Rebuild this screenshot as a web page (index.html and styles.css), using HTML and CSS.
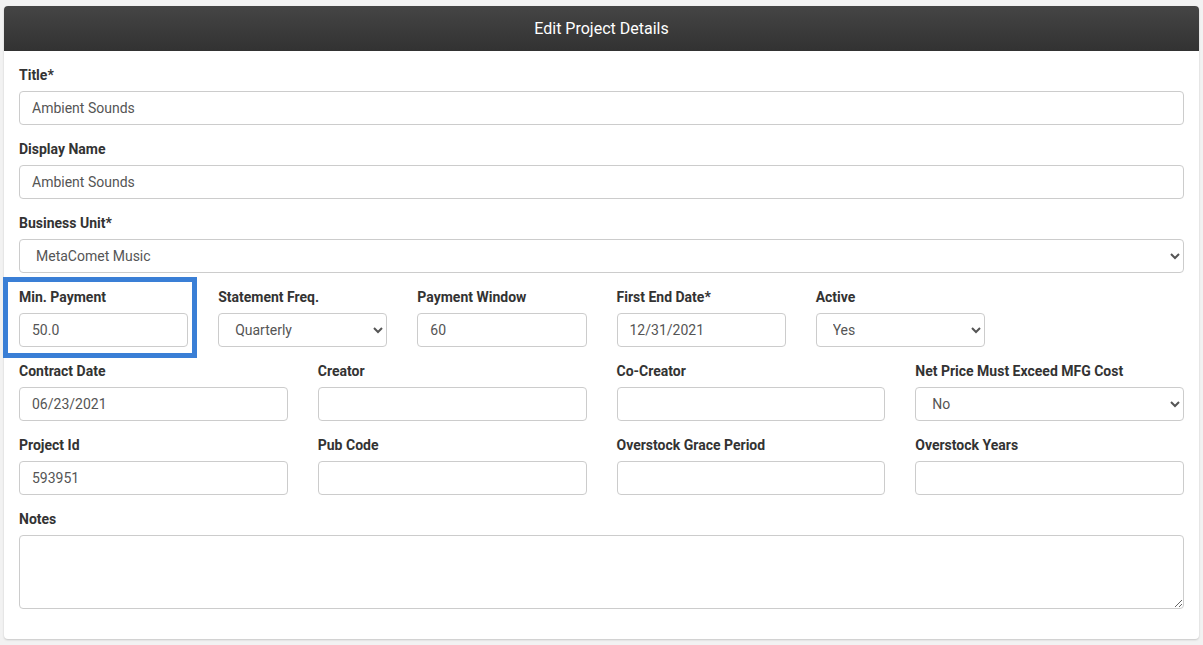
FILE: index.html
```html
<!DOCTYPE html>
<html lang="en">
<head>
<meta charset="UTF-8" />
<meta name="viewport" content="width=device-width, initial-scale=1.0"/>
<title>Edit Project Details</title>
<link rel="stylesheet" href="styles.css">
</head>
<body>
<div class="panel">
<div class="panel-heading">Edit Project Details</div>
<form class="panel-body">

<div class="field">
<label>Title*</label>
<input type="text" value="Ambient Sounds" />
</div>

<div class="field">
<label>Display Name</label>
<input type="text" value="Ambient Sounds" />
</div>

<div class="field">
<label>Business Unit*</label>
<select>
<option>MetaComet Music</option>
</select>
</div>

<div class="row six">
<div class="field highlighted">
<label>Min. Payment</label>
<input type="text" value="50.0" />
</div>
<div class="field">
<label>Statement Freq.</label>
<select>
<option>Quarterly</option>
</select>
</div>
<div class="field">
<label>Payment Window</label>
<input type="text" value="60" />
</div>
<div class="field">
<label>First End Date*</label>
<input type="text" value="12/31/2021" />
</div>
<div class="field">
<label>Active</label>
<select>
<option>Yes</option>
</select>
</div>
</div>

<div class="row four">
<div class="field">
<label>Contract Date</label>
<input type="text" value="06/23/2021" />
</div>
<div class="field">
<label>Creator</label>
<input type="text" />
</div>
<div class="field">
<label>Co-Creator</label>
<input type="text" />
</div>
<div class="field">
<label>Net Price Must Exceed MFG Cost</label>
<select>
<option>No</option>
</select>
</div>
</div>

<div class="row four">
<div class="field">
<label>Project Id</label>
<input type="text" value="593951" />
</div>
<div class="field">
<label>Pub Code</label>
<input type="text" />
</div>
<div class="field">
<label>Overstock Grace Period</label>
<input type="text" />
</div>
<div class="field">
<label>Overstock Years</label>
<input type="text" />
</div>
</div>

<div class="field">
<label>Notes</label>
<textarea></textarea>
</div>

</form>
</div>
</body>
</html>
```

FILE: styles.css
```css
* {
box-sizing: border-box;
margin: 0;
padding: 0;
}

body {
font-family: Roboto, 'Liberation Sans', Arial, sans-serif;
background: #f2f2f2;
padding: 6px 4px;
}

.panel {
background: #fff;
border-radius: 4px;
box-shadow: 0 1px 2px rgba(0, 0, 0, 0.18);
}

.panel-heading {
height: 45px;
line-height: 45px;
text-align: center;
color: #fff;
font-size: 16px;
background: linear-gradient(#454545, #323232);
border-radius: 4px 4px 0 0;
}

.panel-body {
padding: 14px 15px 16px;
}

.field {
margin-bottom: 14px;
position: relative;
}

.field label {
display: block;
font-size: 14px;
font-weight: bold;
line-height: 20px;
color: #333;
margin-bottom: 6px;
}

.field input,
.field select,
.field textarea {
display: block;
width: 100%;
height: 34px;
padding: 6px 12px;
font-family: inherit;
font-size: 14px;
color: #555;
background-color: #fff;
border: 1px solid #ccc;
border-radius: 4px;
outline: none;
}

.field select {
padding-left: 12px;
}

.field textarea {
height: 74px;
resize: vertical;
}

.row {
display: grid;
column-gap: 30px;
}

.row.six {
grid-template-columns: repeat(6, 1fr);
}

.row.four {
grid-template-columns: repeat(4, 1fr);
}

/* blue marker around the first field */
.highlighted::after {
content: "";
position: absolute;
top: -10px;
left: -16px;
right: -9px;
bottom: -11px;
border: 5px solid #3a7fd6;
pointer-events: none;
}
```
